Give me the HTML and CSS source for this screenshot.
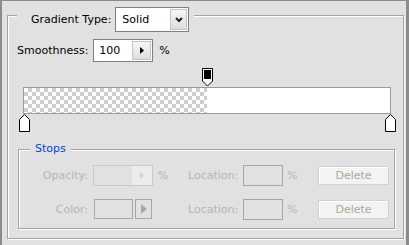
FILE: index.html
```
<!DOCTYPE html>
<html>
<head>
<meta charset="utf-8">
<link rel="stylesheet" href="styles.css">
</head>
<body>
<div class="window">
  <div class="group outer">
    <div class="legend-row">
      <span class="label">Gradient Type:</span>
      <div class="select">
        <span class="select-value">Solid</span>
        <span class="select-btn"><svg width="8" height="6" viewBox="0 0 8 6"><path d="M1 1 L4 4 L7 1" fill="none" stroke="#222" stroke-width="2"/></svg></span>
      </div>
    </div>
    <div class="smooth">
      <span class="label">Smoothness:</span>
      <div class="numfield">
        <span class="num-value">100</span>
        <span class="step"><svg width="4" height="7" viewBox="0 0 4 7"><path d="M0 0 L4 3.5 L0 7 Z" fill="#000"/></svg></span>
      </div>
      <span class="pct-main">%</span>
    </div>
    <div class="gradient">
      <div class="track top-track">
        <span class="marker" style="left:50%"><svg width="11" height="19" viewBox="0 0 11 19"><path d="M0.5 0.5 H10.5 V13 L5.5 18 L0.5 13 Z" fill="#fff" stroke="#000"/><rect x="2" y="2" width="7" height="9" fill="#000"/></svg></span>
      </div>
      <div class="bar"><div class="checker" style="width:50%"></div></div>
      <div class="track bottom-track">
        <span class="marker" style="left:0%"><svg width="11" height="18" viewBox="0 0 11 18"><path d="M5.5 0.5 L10.5 5.5 V17.5 H0.5 V5.5 Z" fill="#fff" stroke="#000"/></svg></span>
        <span class="marker" style="left:100%"><svg width="11" height="18" viewBox="0 0 11 18"><path d="M5.5 0.5 L10.5 5.5 V17.5 H0.5 V5.5 Z" fill="#fff" stroke="#000"/></svg></span>
      </div>
    </div>
    <div class="group stops">
      <div class="stops-legend">Stops</div>
      <div class="stops-grid">
        <span class="lbl">Opacity:</span>
        <div class="opacity-field"><span class="o-left"></span><span class="o-step"><svg width="4" height="7" viewBox="0 0 4 7"><path d="M0 0 L4 3.5 L0 7 Z" fill="#cfcfcf"/></svg></span></div>
        <span class="pct">%</span>
        <span class="lbl">Location:</span>
        <div class="loc-field"></div>
        <span class="pct pct2">%</span>
        <div class="btn">Delete</div>

        <span class="lbl">Color:</span>
        <div class="color-cell"><span class="swatch"></span><span class="arrow-btn"><svg width="6" height="10" viewBox="0 0 6 10"><path d="M0 0 L6 5 L0 10 Z" fill="#a8a8a8"/></svg></span></div>
        <span class="pct"></span>
        <span class="lbl">Location:</span>
        <div class="loc-field"></div>
        <span class="pct pct2">%</span>
        <div class="btn">Delete</div>
      </div>
    </div>
  </div>
</div>
</body>
</html>
```
FILE: styles.css
```
html, body {
  margin: 0;
  padding: 0;
  background: #e1e1e1;
}

.window {
  width: 409px;
  height: 245px;
  box-sizing: border-box;
  border-left: 2px solid #8b8b8b;
  border-top: 1px solid #8b8b8b;
  border-right: 3px solid #8b8b8b;
  padding: 14px 0 0 5px;
  background: #e1e1e1;
  font-family: "DejaVu Sans", Verdana, sans-serif;
  font-size: 11px;
  color: #000;
}

.group {
  box-sizing: border-box;
  border: 1px solid #a3a3a3;
  box-shadow: 1px 1px 0 #fff, inset 1px 1px 0 #fff;
}

.outer {
  width: 397px;
  height: 224px;
}

.legend-row {
  display: flex;
  align-items: center;
  gap: 4px;
  width: max-content;
  height: 25px;
  margin: -9px 0 0 9px;
  padding: 0 5px 0 14px;
  background: #e1e1e1;
}

.select {
  display: flex;
  width: 74px;
  height: 25px;
  box-sizing: border-box;
  border: 1px solid #808080;
  background: #fff;
}

.select-value {
  flex: 1;
  padding-left: 6px;
  line-height: 23px;
}

.select-btn {
  width: 17px;
  box-sizing: border-box;
  margin: 1px 1px 1px 0;
  display: flex;
  align-items: center;
  justify-content: center;
  border: 1px solid #c4c4c4;
  background: linear-gradient(#f6f6f6, #dedede);
}

.smooth {
  display: flex;
  align-items: center;
  height: 23px;
  margin: 7px 0 0 9px;
}

.numfield {
  display: flex;
  width: 60px;
  height: 23px;
  box-sizing: border-box;
  margin-left: 5px;
  border: 1px solid #808080;
  background: #fff;
}

.num-value {
  flex: 1;
  padding-left: 5px;
  line-height: 21px;
}

.step {
  width: 19px;
  box-sizing: border-box;
  margin: 1px 1px 1px 0;
  display: flex;
  align-items: center;
  justify-content: center;
  border: 1px solid #c4c4c4;
  background: linear-gradient(#f6f6f6, #dedede);
}

.pct-main {
  margin-left: 6px;
}

.gradient {
  width: 368px;
  margin: 6px 0 0 15px;
}

.track {
  position: relative;
  margin: 0 1px;
}

.top-track {
  height: 19px;
}

.bottom-track {
  height: 18px;
}

.marker {
  position: absolute;
  top: 0;
  margin-left: -5px;
  display: block;
  line-height: 0;
}

.bar {
  display: flex;
  height: 27px;
  box-sizing: border-box;
  border: 1px solid #9a9a9a;
  background: #fff;
}

.checker {
  height: 100%;
  background-color: #fff;
  background-image: conic-gradient(#cdcdcd 25%, #fff 0 50%, #cdcdcd 0 75%, #fff 0);
  background-size: 8px 8px;
}

.stops {
  width: 377px;
  height: 80px;
  margin: 17px 0 0 10px;
}

.stops-legend {
  width: max-content;
  height: 14px;
  line-height: 14px;
  margin: -8px 0 0 11px;
  padding: 0 5px;
  color: #0046d5;
  background: #e1e1e1;
}

.stops-grid {
  display: grid;
  grid-template-columns: 74px 60px 35px 55px 40px 35px 71px;
  grid-template-rows: 21px 20px;
  row-gap: 13px;
  align-items: center;
  margin-top: 9px;
}

.lbl {
  text-align: right;
  padding-right: 5px;
  color: #b5b5b5;
}

.pct {
  padding-left: 5px;
  color: #b5b5b5;
}

.pct2 {
  padding-left: 4px;
}

.opacity-field {
  display: flex;
  height: 21px;
  box-sizing: border-box;
  border: 1px solid #cbc9b9;
}

.o-left {
  flex: 1;
}

.o-step {
  width: 20px;
  display: flex;
  align-items: center;
  justify-content: center;
  background: #ececec;
}

.color-cell {
  display: flex;
  height: 20px;
  margin-left: 1px;
}

.swatch {
  width: 39px;
  box-sizing: border-box;
  border: 1px solid #a8a8a8;
}

.arrow-btn {
  width: 17px;
  box-sizing: border-box;
  margin-left: 2px;
  border: 1px solid #a8a8a8;
  display: flex;
  align-items: center;
  justify-content: center;
}

.loc-field {
  height: 21px;
  box-sizing: border-box;
  border: 1px solid #a5a5a5;
}

.btn {
  height: 19px;
  box-sizing: border-box;
  border: 1px solid #d2d2d2;
  background: #f3f3f3;
  box-shadow: inset 1px 1px 0 #fff;
  color: #aca899;
  text-align: center;
  line-height: 17px;
}
```
